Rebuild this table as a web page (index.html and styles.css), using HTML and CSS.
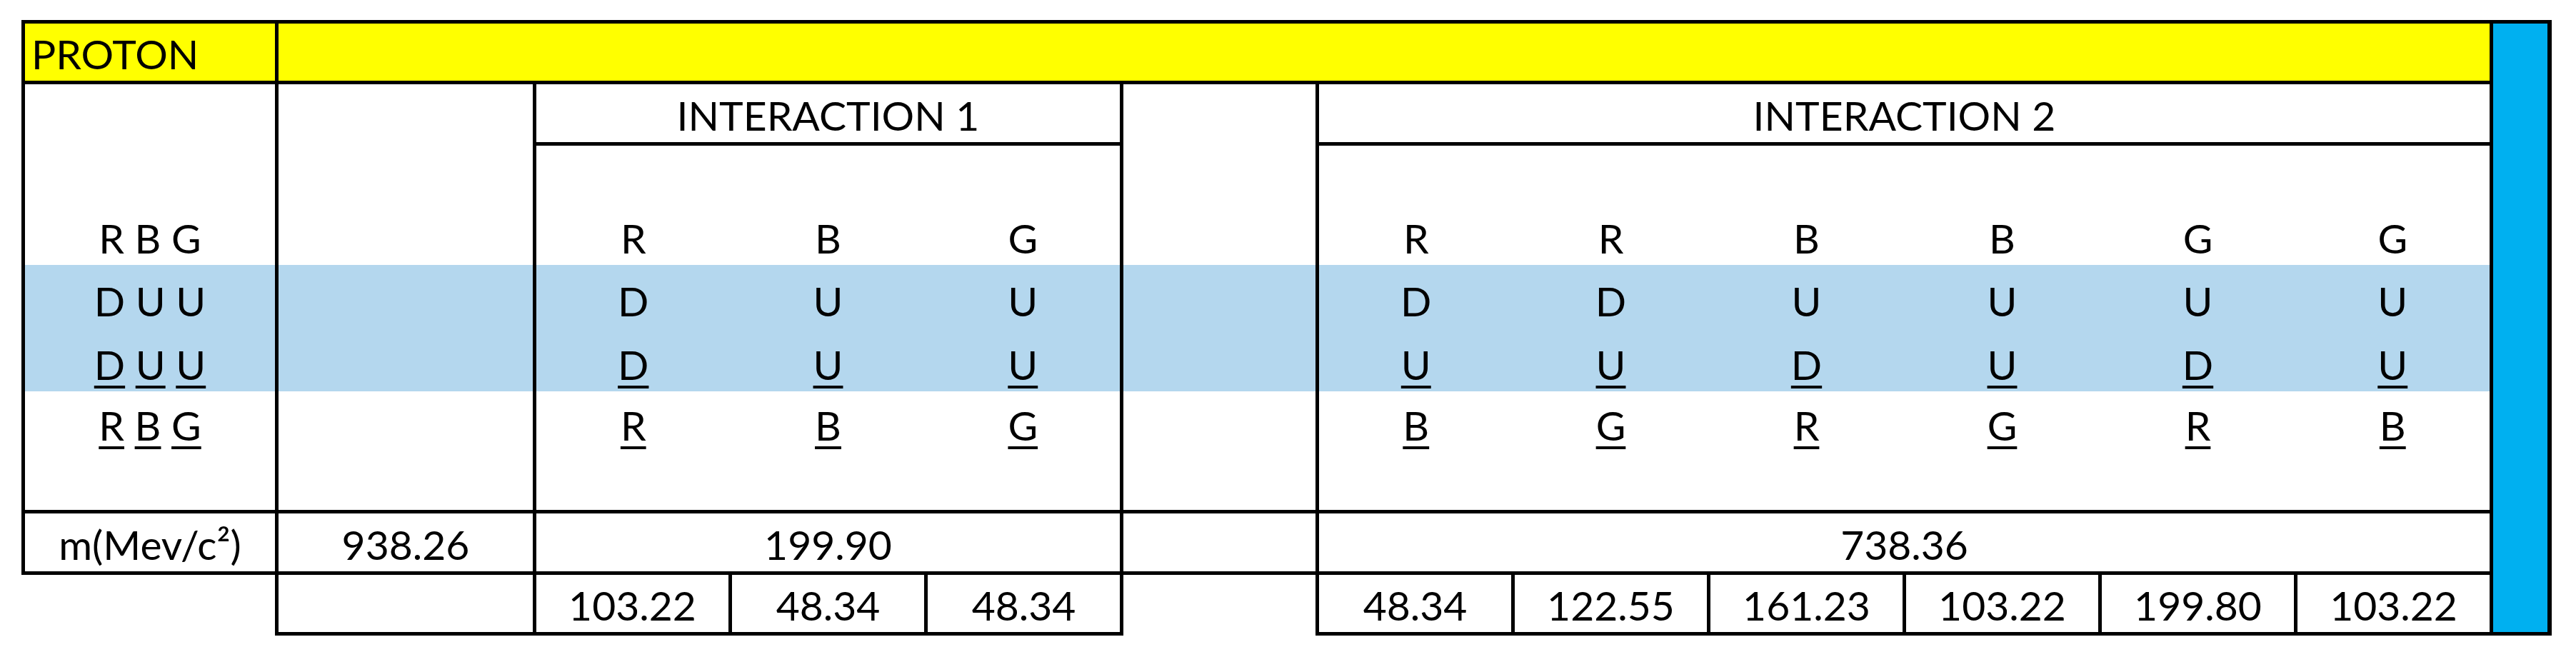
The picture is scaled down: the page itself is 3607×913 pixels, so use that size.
FILE: index.html
```html
<!DOCTYPE html>
<html lang="en">
<head>
<meta charset="utf-8">
<title>Proton</title>
<link rel="stylesheet" href="styles.css">
</head>
<body>
<div class="page">
<table class="sheet">
  <colgroup>
    <col class="c-a"><col class="c-b">
    <col class="c-n"><col class="c-n"><col class="c-n">
    <col class="c-n">
    <col class="c-n"><col class="c-n"><col class="c-n"><col class="c-n"><col class="c-n"><col class="c-n">
    <col class="c-blue">
  </colgroup>
  <tr class="r-title">
    <td class="all title">PROTON</td>
    <td class="all yellow" colspan="11"></td>
    <td class="all blue" rowspan="10"></td>
  </tr>
  <tr class="r-head">
    <td class="bl br"></td>
    <td class="br"></td>
    <td class="all" colspan="3">INTERACTION 1</td>
    <td class="bl br"></td>
    <td class="all" colspan="6">INTERACTION 2</td>
  </tr>
  <tr class="r-blank1">
    <td class="bl br"></td><td class="br"></td>
    <td class="bl"></td><td></td><td class="br"></td>
    <td class="bl br"></td>
    <td class="bl"></td><td></td><td></td><td></td><td></td><td class="br"></td>
  </tr>
  <tr class="r-colour">
    <td class="bl br">R B G</td><td class="br"></td>
    <td class="bl">R</td><td>B</td><td class="br">G</td>
    <td class="bl br"></td>
    <td class="bl">R</td><td>R</td><td>B</td><td>B</td><td>G</td><td class="br">G</td>
  </tr>
  <tr class="r-quark band">
    <td class="bl br">D U U</td><td class="br"></td>
    <td class="bl">D</td><td>U</td><td class="br">U</td>
    <td class="bl br"></td>
    <td class="bl">D</td><td>D</td><td>U</td><td>U</td><td>U</td><td class="br">U</td>
  </tr>
  <tr class="r-anti band">
    <td class="bl br"><u>D</u> <u>U</u> <u>U</u></td><td class="br"></td>
    <td class="bl"><u>D</u></td><td><u>U</u></td><td class="br"><u>U</u></td>
    <td class="bl br"></td>
    <td class="bl"><u>U</u></td><td><u>U</u></td><td><u>D</u></td><td><u>U</u></td><td><u>D</u></td><td class="br"><u>U</u></td>
  </tr>
  <tr class="r-anticolour">
    <td class="bl br"><u>R</u> <u>B</u> <u>G</u></td><td class="br"></td>
    <td class="bl"><u>R</u></td><td><u>B</u></td><td class="br"><u>G</u></td>
    <td class="bl br"></td>
    <td class="bl"><u>B</u></td><td><u>G</u></td><td><u>R</u></td><td><u>G</u></td><td><u>R</u></td><td class="br"><u>B</u></td>
  </tr>
  <tr class="r-blank2">
    <td class="bl br"></td><td class="br"></td>
    <td class="bl"></td><td></td><td class="br"></td>
    <td class="bl br"></td>
    <td class="bl"></td><td></td><td></td><td></td><td></td><td class="br"></td>
  </tr>
  <tr class="r-mass">
    <td class="all">m(Mev/c²)</td>
    <td class="all">938.26</td>
    <td class="all" colspan="3">199.90</td>
    <td class="all"></td>
    <td class="all" colspan="6">738.36</td>
  </tr>
  <tr class="r-parts">
    <td></td>
    <td class="all"></td>
    <td class="all">103.22</td><td class="all">48.34</td><td class="all">48.34</td>
    <td class="bl br"></td>
    <td class="all">48.34</td><td class="all">122.55</td><td class="all">161.23</td><td class="all">103.22</td><td class="all">199.80</td><td class="all">103.22</td>
  </tr>
</table>
</div>
</body>
</html>
```

FILE: styles.css
```css
html, body {
  margin: 0;
  padding: 0;
  background: #ffffff;
}

.page {
  padding: 28px 0 0 30px;
}

.sheet {
  border-collapse: collapse;
  table-layout: fixed;
  width: 3539px;
  font-family: Lato, "Liberation Sans", sans-serif;
  font-size: 57px;
  color: #000000;
}

.c-a { width: 355px; }
.c-b { width: 361px; }
.c-n { width: 274px; }
.c-blue { width: 81px; }

.sheet td {
  padding: 0 0 9px 0;
  line-height: 1;
  text-align: center;
  vertical-align: bottom;
  white-space: nowrap;
  overflow: hidden;
}

.sheet td.all { border: 5px solid #000000; }
.sheet td.bl { border-left: 5px solid #000000; }
.sheet td.br { border-right: 5px solid #000000; }

.r-title { height: 85px; }
.r-head { height: 86px; }
.r-blank1 { height: 84px; }
.r-colour { height: 85px; }
.r-quark { height: 88px; }
.r-anti { height: 89px; }
.r-anticolour { height: 85px; }
.r-blank2 { height: 84px; }
.r-mass { height: 86px; }
.r-parts { height: 85px; }

.sheet td.title {
  text-align: left;
  padding-left: 9px;
  background: #ffff00;
}

.sheet td.yellow { background: #ffff00; }
.sheet td.blue { background: #00b0f0; border-right-width: 6px; }

.band td { background: #b4d7ee; }

.sheet u {
  text-decoration: underline;
  text-decoration-thickness: 4px;
  text-underline-offset: 8px;
}
```
